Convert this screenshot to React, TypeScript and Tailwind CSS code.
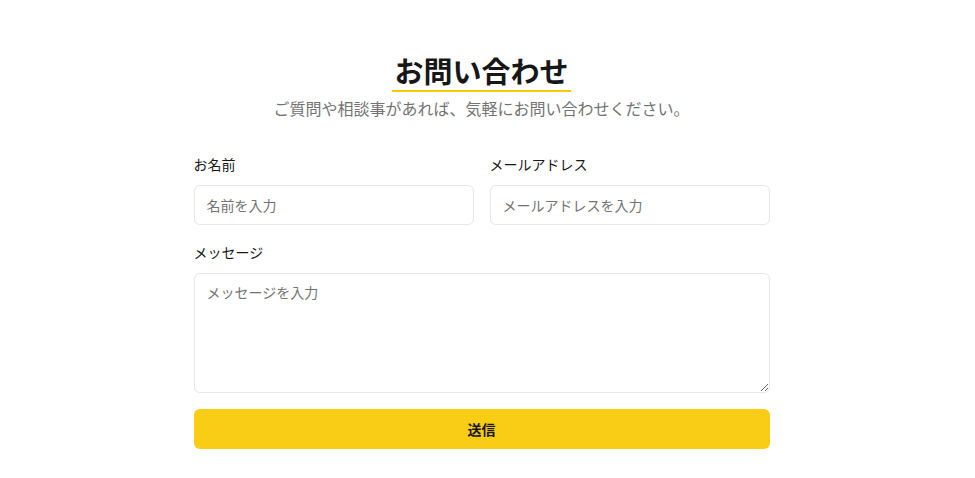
export default function App() {
  return (
    <div
      className="min-h-screen bg-white pt-[51px]"
      style={{ fontFamily: '"Noto Sans CJK JP", "Noto Sans", sans-serif' }}
    >
      <div className="mx-auto w-[576px] translate-x-[-6px]">
        {/* Heading */}
        <div className="flex flex-col items-center">
          <h1 className="border-b-2 border-yellow-400 px-0.5 pb-px text-[29px] font-bold leading-[38px] text-neutral-900">
            お問い合わせ
          </h1>
          <p className="mt-1 text-base text-neutral-500">
            ご質問や相談事があれば、気軽にお問い合わせください。
          </p>
        </div>

        {/* Form */}
        <form className="mt-[34px]" onSubmit={(e) => e.preventDefault()}>
          <div className="grid grid-cols-2 gap-4">
            <div>
              <label className="block text-sm leading-5 text-neutral-900">お名前</label>
              <input
                type="text"
                placeholder="名前を入力"
                className="mt-[11px] h-10 w-full rounded-md border border-gray-200 px-3 text-sm text-neutral-900 placeholder:text-neutral-500 focus:outline-none"
              />
            </div>
            <div>
              <label className="block text-sm leading-5 text-neutral-900">メールアドレス</label>
              <input
                type="email"
                placeholder="メールアドレスを入力"
                className="mt-[11px] h-10 w-full rounded-md border border-gray-200 px-3 text-sm text-neutral-900 placeholder:text-neutral-500 focus:outline-none"
              />
            </div>
          </div>

          <div className="mt-[17px]">
            <label className="block text-sm leading-5 text-neutral-900">メッセージ</label>
            <textarea
              placeholder="メッセージを入力"
              className="mt-[11px] block h-[120px] w-full rounded-md border border-gray-200 px-3 py-2 text-sm text-neutral-900 placeholder:text-neutral-500 focus:outline-none"
            />
          </div>

          <button
            type="submit"
            className="mt-4 h-10 w-full rounded-md bg-[#f9cc15] text-sm font-bold text-neutral-900"
          >
            送信
          </button>
        </form>
      </div>
    </div>
  )
}
